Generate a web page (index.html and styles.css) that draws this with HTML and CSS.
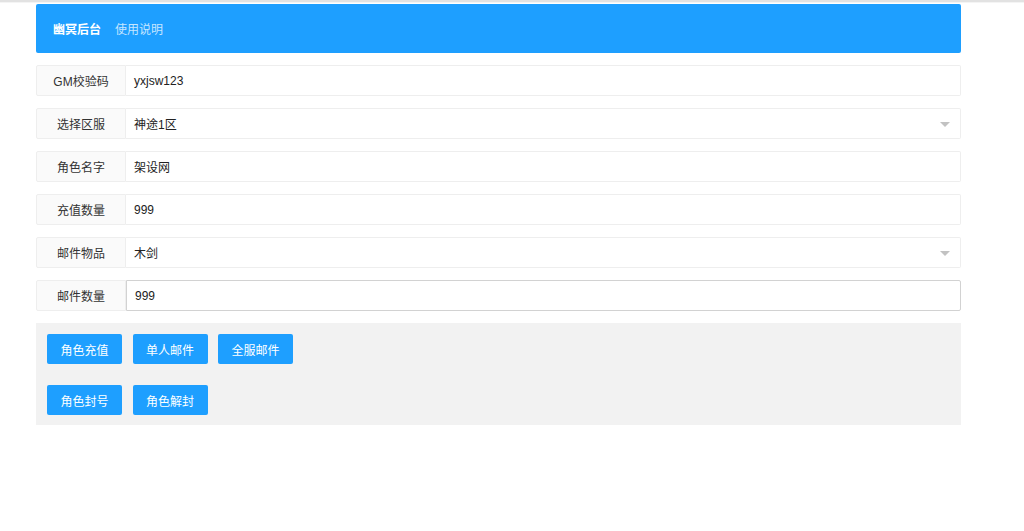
FILE: index.html
```html
<!DOCTYPE html>
<html lang="zh-CN">
<head>
    <meta charset="UTF-8">
    <title>幽冥后台</title>
    <link rel="stylesheet" href="styles.css">
</head>
<body>
    <div class="topline"></div>
    <div class="wrap">
        <div class="header">
            <span class="logo">幽冥后台</span>
            <a class="nav" href="#">使用说明</a>
        </div>

        <div class="form-item">
            <label>GM校验码</label>
            <div class="field">yxjsw123</div>
        </div>
        <div class="form-item">
            <label>选择区服</label>
            <div class="field select">神途1区<i class="arrow"></i></div>
        </div>
        <div class="form-item">
            <label>角色名字</label>
            <div class="field">架设网</div>
        </div>
        <div class="form-item">
            <label>充值数量</label>
            <div class="field">999</div>
        </div>
        <div class="form-item">
            <label>邮件物品</label>
            <div class="field select">木剑<i class="arrow"></i></div>
        </div>
        <div class="form-item">
            <label>邮件数量</label>
            <div class="field focus">999</div>
        </div>

        <div class="btn-panel">
            <div class="btn-row">
                <button class="btn">角色充值</button>
                <button class="btn">单人邮件</button>
                <button class="btn">全服邮件</button>
            </div>
            <div class="btn-row">
                <button class="btn">角色封号</button>
                <button class="btn">角色解封</button>
            </div>
        </div>
    </div>
</body>
</html>
```

FILE: styles.css
```css
body {
    margin: 0;
    font-family: "Liberation Sans", "Noto Sans CJK SC", sans-serif;
    font-size: 12px;
    color: #333;
    background: #fff;
}
.topline {
    height: 2px;
    background: #e2e2e2;
    border-bottom: 1px solid #f4f4f4;
}
.wrap {
    width: 925px;
    margin-left: 36px;
    padding-top: 1px;
}
.header {
    height: 49px;
    background: #1e9fff;
    border-radius: 2px;
    display: flex;
    align-items: center;
    padding-left: 17px;
    margin-bottom: 12px;
}
.logo {
    color: #fff;
    font-weight: bold;
    margin-right: 14px;
}
.nav {
    color: rgba(255, 255, 255, 0.75);
    text-decoration: none;
}
.form-item {
    display: flex;
    height: 31px;
    margin-bottom: 12px;
}
.form-item label {
    width: 88px;
    flex: none;
    display: flex;
    align-items: center;
    justify-content: center;
    background: #fafafa;
    border: 1px solid #eee;
    border-radius: 2px 0 0 2px;
    color: #333;
}
.field {
    flex: 1;
    display: flex;
    align-items: center;
    padding-left: 8px;
    border: 1px solid #eee;
    border-left: none;
    border-radius: 0 2px 2px 0;
    position: relative;
    color: #222;
}
.field.focus {
    border: 1px solid #d2d2d2;
}
.arrow {
    position: absolute;
    right: 10px;
    top: 13px;
    border: 5px solid transparent;
    border-top: 5px solid #c2c2c2;
    border-bottom: none;
}
.btn-panel {
    background: #f2f2f2;
    padding: 11px 11px 10px;
    margin-top: 1px;
}
.btn-row {
    display: flex;
    gap: 10.5px;
}
.btn-row + .btn-row {
    margin-top: 21px;
}
.btn {
    width: 75px;
    height: 30px;
    border: none;
    border-radius: 2px;
    background: #1e9fff;
    color: #fff;
    font-family: inherit;
    font-size: 12px;
    padding: 0;
    cursor: pointer;
}
```
